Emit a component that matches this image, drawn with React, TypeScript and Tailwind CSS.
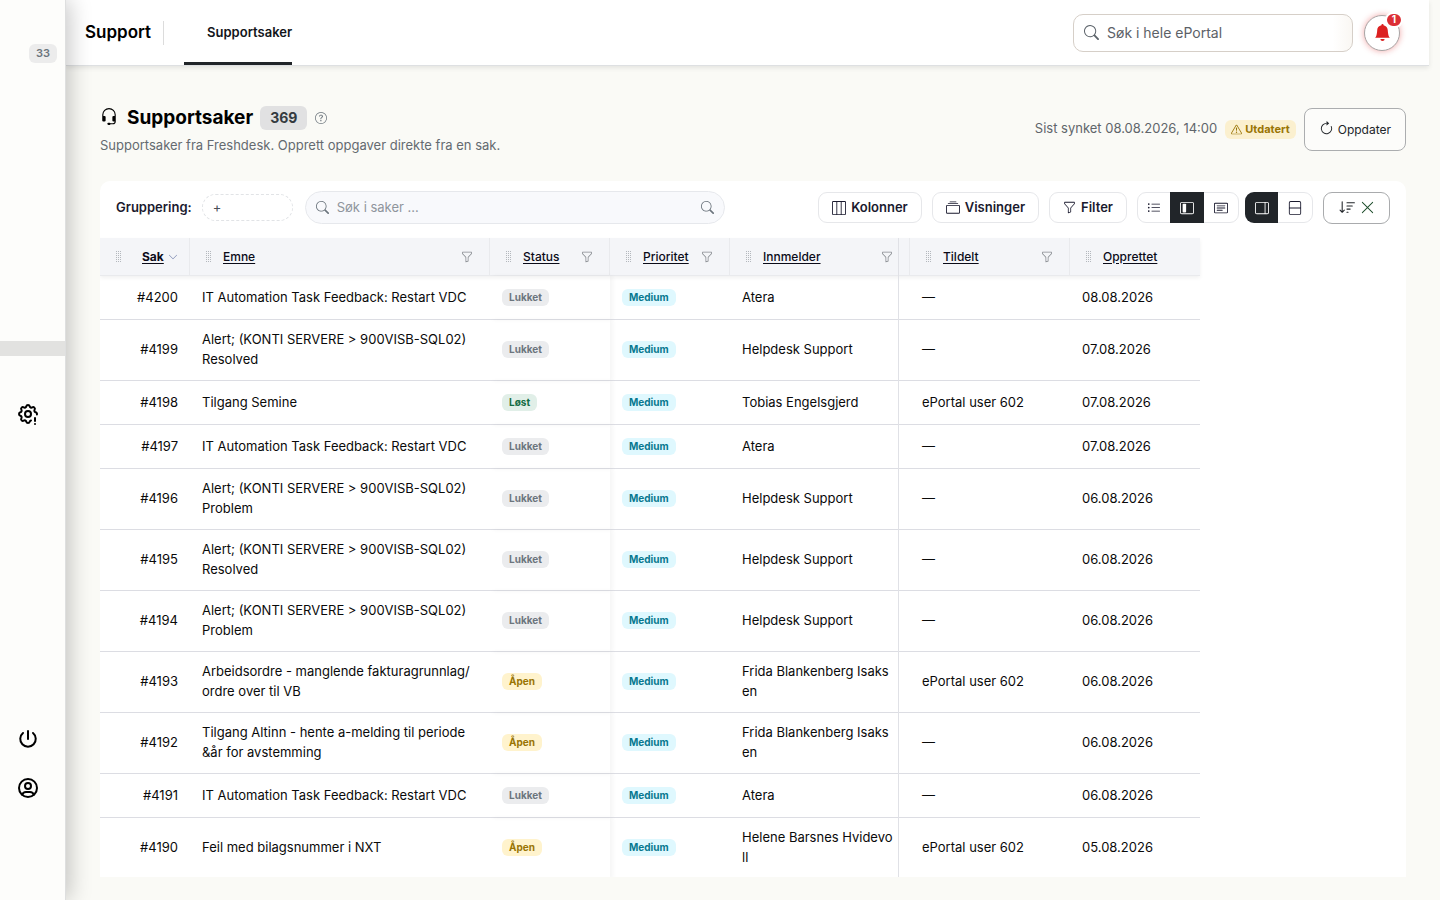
import type { ReactNode } from 'react';
import {
  BsArrowClockwise,
  BsBellFill,
  BsCardText,
  BsChevronDown,
  BsCollection,
  BsExclamationTriangle,
  BsFunnel,
  BsHeadset,
  BsLayoutSidebarInset,
  BsLayoutSidebarReverse,
  BsLayoutSplit,
  BsLayoutThreeColumns,
  BsListUl,
  BsQuestionCircle,
  BsSearch,
  BsSortDown,
  BsXLg,
} from 'react-icons/bs';
import { TbPower, TbSettingsExclamation, TbUserCircle } from 'react-icons/tb';

type Status = 'Lukket' | 'Løst' | 'Åpen';

interface Ticket {
  id: number;
  subject: string;
  status: Status;
  requester: string;
  assignee: string;
  created: string;
}

const tickets: Ticket[] = [
  { id: 4200, subject: 'IT Automation Task Feedback: Restart VDC', status: 'Lukket', requester: 'Atera', assignee: '—', created: '08.08.2026' },
  { id: 4199, subject: 'Alert; (KONTI SERVERE > 900VISB-SQL02) Resolved', status: 'Lukket', requester: 'Helpdesk Support', assignee: '—', created: '07.08.2026' },
  { id: 4198, subject: 'Tilgang Semine', status: 'Løst', requester: 'Tobias Engelsgjerd', assignee: 'ePortal user 602', created: '07.08.2026' },
  { id: 4197, subject: 'IT Automation Task Feedback: Restart VDC', status: 'Lukket', requester: 'Atera', assignee: '—', created: '07.08.2026' },
  { id: 4196, subject: 'Alert; (KONTI SERVERE > 900VISB-SQL02) Problem', status: 'Lukket', requester: 'Helpdesk Support', assignee: '—', created: '06.08.2026' },
  { id: 4195, subject: 'Alert; (KONTI SERVERE > 900VISB-SQL02) Resolved', status: 'Lukket', requester: 'Helpdesk Support', assignee: '—', created: '06.08.2026' },
  { id: 4194, subject: 'Alert; (KONTI SERVERE > 900VISB-SQL02) Problem', status: 'Lukket', requester: 'Helpdesk Support', assignee: '—', created: '06.08.2026' },
  { id: 4193, subject: 'Arbeidsordre - manglende fakturagrunnlag/\u200bordre over til VB', status: 'Åpen', requester: 'Frida Blankenberg Isaksen', assignee: 'ePortal user 602', created: '06.08.2026' },
  { id: 4192, subject: 'Tilgang Altinn - hente a-melding til periode &år for avstemming', status: 'Åpen', requester: 'Frida Blankenberg Isaksen', assignee: '—', created: '06.08.2026' },
  { id: 4191, subject: 'IT Automation Task Feedback: Restart VDC', status: 'Lukket', requester: 'Atera', assignee: '—', created: '06.08.2026' },
  { id: 4190, subject: 'Feil med bilagsnummer i NXT', status: 'Åpen', requester: 'Helene Barsnes Hvidevoll', assignee: 'ePortal user 602', created: '05.08.2026' },
];

const columns = [
  { label: 'Sak', width: 'w-[90px]', filter: false, sorted: true },
  { label: 'Emne', width: 'w-[300px]', filter: true, sorted: false },
  { label: 'Status', width: 'w-[120px]', filter: true, sorted: false },
  { label: 'Prioritet', width: 'w-[120px]', filter: true, sorted: false },
  { label: 'Innmelder', width: 'w-[180px]', filter: true, sorted: false },
  { label: 'Tildelt', width: 'w-[160px]', filter: true, sorted: false },
  { label: 'Opprettet', width: 'w-[130px]', filter: false, sorted: false },
];

const statusStyles: Record<Status, string> = {
  Lukket: 'bg-[#ebecee] text-[#6c757d]',
  Løst: 'bg-[#e1efe8] text-[#146c43]',
  Åpen: 'bg-[#fff3cd] text-[#997404]',
};

function Badge({ className, children }: { className: string; children: ReactNode }) {
  return (
    <span className={`inline-block rounded-md px-[7px] align-[1px] text-[10px] leading-[17px] font-bold ${className}`}>
      {children}
    </span>
  );
}

function Grip() {
  return (
    <svg className="h-3 w-[6px] shrink-0 text-[#b4b8bd]" viewBox="0 0 6 12" fill="currentColor" aria-hidden="true">
      {[0, 2, 4, 6, 8, 10].map((y) => (
        <g key={y}>
          <rect x="0" y={y} width="1" height="1" />
          <rect x="2" y={y} width="1" height="1" />
          <rect x="4" y={y} width="1" height="1" />
        </g>
      ))}
    </svg>
  );
}

function Sidebar() {
  return (
    <aside className="relative z-20 flex w-[66px] shrink-0 flex-col border-r border-[#dedfdf] bg-[#fdfdfb] shadow-[4px_0_22px_rgba(0,0,0,0.22)]">
      <div className="flex justify-end pt-11 pr-2">
        <span className="rounded-md bg-[#ececec] px-[7px] text-[11px] leading-[19px] font-semibold text-[#6c757d]">33</span>
      </div>
      <div className="mt-[278px] h-[15px] bg-[#e2e2e0]" />
      <nav className="flex flex-1 flex-col pt-[46px] pb-[100px] pl-4 text-black">
        <a href="#innstillinger" aria-label="Innstillinger">
          <TbSettingsExclamation className="size-6" />
        </a>
        <a href="#logg-ut" aria-label="Logg ut" className="mt-auto">
          <TbPower className="size-6" />
        </a>
        <a href="#profil" aria-label="Profil" className="mt-[25px]">
          <TbUserCircle className="size-6" />
        </a>
      </nav>
    </aside>
  );
}

function TopBar() {
  return (
    <header className="relative z-10 mr-[11px] flex h-[66px] shrink-0 items-stretch border-b border-[#dee0e2] bg-white pr-[29px] pl-[19px] shadow-[0_2px_5px_rgba(0,0,0,0.09)]">
      <div className="flex items-center">
        <span className="text-[17px] font-semibold text-black">Support</span>
        <span className="ml-3 h-6 w-px bg-[#dcdcdc]" />
      </div>
      <nav className="ml-5 flex">
        <a href="#supportsaker" className="flex items-center rounded-t-sm border-b-3 border-[#212529] pt-[3px] pl-[23px] text-[13px] font-semibold text-[#12151a]">
          Supportsaker
        </a>
      </nav>
      <div className="ml-auto flex items-center gap-[11px]">
        <label className="flex h-[38px] w-[280px] items-center gap-2 rounded-[10px] border border-[#d6cfc8] bg-linear-to-r from-white from-93% to-[#faf7f3] px-[10px]">
          <BsSearch className="size-[15px] text-[#5c636a]" />
          <input
            type="search"
            aria-label="Søk i hele ePortal"
            placeholder="Søk i hele ePortal"
            className="min-w-0 flex-1 bg-transparent text-[14px] text-[#212529] outline-none placeholder:text-[#5c6167]"
          />
        </label>
        <button type="button" aria-label="Varsler" className="relative flex size-9 items-center justify-center rounded-full border border-[#a9a5a5] bg-white text-[#dc2020] shadow-[0_0_6px_rgba(220,38,38,0.4)]">
          <BsBellFill className="size-[17px]" />
          <span className="absolute -top-1 -right-1 flex h-4 w-[18px] items-center justify-center rounded-full border-2 border-white bg-[#dc2f35] text-[10px] font-bold text-white">
            1
          </span>
        </button>
      </div>
    </header>
  );
}

function PageHeading() {
  return (
    <div className="flex items-center justify-between">
      <div>
        <div className="flex items-center">
          <BsHeadset className="mb-[3px] size-[18px] text-black" />
          <h1 className="ml-[9px] text-[19px] leading-6 font-bold text-black">Supportsaker</h1>
          <span className="ml-[7px] rounded-md bg-[#e1e1e2] px-[10px] text-[14px] leading-6 font-bold text-[#343a40]">369</span>
          <button type="button" aria-label="Hjelp" className="ml-2 text-[#6c757d]">
            <BsQuestionCircle className="size-3" />
          </button>
        </div>
        <p className="mt-[5px] text-[13px] leading-5 text-[#646a70]">
          Supportsaker fra Freshdesk. Opprett oppgaver direkte fra en sak.
        </p>
      </div>
      <div className="mb-[3px] flex items-center gap-2">
        <span className="text-[13px] text-[#5f656b]">Sist synket 08.08.2026, 14:00</span>
        <span className="flex items-center gap-[3px] rounded-md bg-[#fbf0cf] px-[6px] text-[11px] leading-[19px] font-bold text-[#997404]">
          <BsExclamationTriangle className="size-[11px]" />
          Utdatert
        </span>
        <button type="button" className="flex h-[43px] items-center gap-1 rounded-lg border border-[#abadaf] bg-[#fcfcfa] px-[14px] pt-[2px] text-[12px] text-[#212529]">
          <BsArrowClockwise className="mb-1 size-[15px]" />
          Oppdater
        </button>
      </div>
    </div>
  );
}

function ToolButton({ icon, children }: { icon: ReactNode; children: ReactNode }) {
  return (
    <button type="button" className="flex h-[31px] items-center gap-[5px] rounded-[9px] border border-[#e6e7ea] bg-white px-[13px] text-[13px] font-semibold text-[#1a1a2e]">
      {icon}
      {children}
    </button>
  );
}

function Toolbar() {
  return (
    <div className="flex h-[57px] items-center px-4 pb-1">
      <span className="text-[13px] font-semibold text-[#1a1a2e]">Gruppering:</span>
      <button type="button" aria-label="Legg til gruppering" className="ml-[10px] flex h-[27px] w-[91px] items-center rounded-full border border-dashed border-[#e1e3e6] px-[10px] text-[13px] text-[#495057]">
        +
      </button>
      <label className="ml-3 flex h-[33px] w-[420px] items-center gap-2 rounded-full border border-[#e6e8ec] bg-[#f8f9fc] px-[10px] text-[#6c757d]">
        <BsSearch className="size-[13px]" />
        <input
          type="search"
          aria-label="Søk i saker"
          placeholder="Søk i saker ..."
          className="min-w-0 flex-1 bg-transparent text-[13px] text-[#212529] outline-none placeholder:text-[#8f959c]"
        />
        <BsSearch className="size-[13px]" />
      </label>
      <div className="ml-auto flex items-center gap-[10px]">
        <ToolButton icon={<BsLayoutThreeColumns className="size-[14px]" />}>Kolonner</ToolButton>
        <ToolButton icon={<BsCollection className="size-[14px]" />}>Visninger</ToolButton>
        <ToolButton icon={<BsFunnel className="size-[13px]" />}>Filter</ToolButton>
        <div className="flex h-[31px] rounded-[9px] border border-[#e6e7ea] text-[#1a1a2e]">
          <button type="button" aria-label="Liste" className="flex w-8 items-center justify-center">
            <BsListUl className="size-[14px]" />
          </button>
          <button type="button" aria-label="Delt visning" className="-my-px flex w-[34px] items-center justify-center bg-[#212529] text-white">
            <BsLayoutSidebarInset className="size-[14px]" />
          </button>
          <button type="button" aria-label="Kort" className="flex w-[34px] items-center justify-center">
            <BsCardText className="size-[14px]" />
          </button>
        </div>
        <div className="-ml-1 flex h-[31px] rounded-[9px] border border-[#e6e7ea] text-[#1a1a2e]">
          <button type="button" aria-label="Panel til høyre" className="-my-px -ml-px flex w-[33px] items-center justify-center rounded-l-[9px] bg-[#212529] text-white">
            <BsLayoutSidebarReverse className="size-[14px]" />
          </button>
          <button type="button" aria-label="Panel under" className="flex w-[34px] items-center justify-center">
            <BsLayoutSplit className="size-[14px] rotate-90" />
          </button>
        </div>
        <button type="button" aria-label="Nullstill sortering" className="flex h-8 w-[67px] items-center justify-center gap-1 rounded-[9px] border border-[#a9abad] text-[#212529]">
          <BsSortDown className="size-[17px]" />
          <BsXLg className="size-[15px] text-[#1d4d2b]" />
        </button>
      </div>
    </div>
  );
}

function TicketTable() {
  return (
    <div className="relative w-[1100px]">
      <table className="w-full table-fixed border-separate border-spacing-0 text-[13px]">
        <thead>
          <tr className="h-[38px] shadow-[0_2px_4px_rgba(0,0,0,0.06)]">
            {columns.map((col) => (
              <th
                key={col.label}
                scope="col"
                className={`border-r border-b border-[#e9eaed] bg-[#f4f5f8] p-0 last:border-r-0 ${col.width}`}
              >
                <div className="flex items-center px-4">
                  <Grip />
                  <a
                    href={`#${col.label.toLowerCase()}`}
                    className={`text-[12px] text-[#0b0b18] underline underline-offset-2 ${col.sorted ? 'ml-5 font-bold' : 'ml-[11px] font-medium'}`}
                  >
                    {col.label}
                  </a>
                  {col.sorted && <BsChevronDown className="-mr-2 ml-1 size-[10px] shrink-0 text-[#6b7aa8]" />}
                  {col.filter && (
                    <button type="button" aria-label={`Filtrer ${col.label}`} className="ml-auto text-[#85898e]">
                      <BsFunnel className="size-3" />
                    </button>
                  )}
                </div>
              </th>
            ))}
          </tr>
        </thead>
        <tbody className="leading-5 text-[#0a0a0a]">
          {tickets.map((t) => (
            <tr key={t.id} className="h-11 *:border-b *:border-[#dcdde3] *:pt-[9px] *:pb-[11px] *:pl-3">
              <td className="pr-3 text-right">#{t.id}</td>
              <td className="pr-3 wrap-anywhere">{t.subject}</td>
              <td className="shadow-[3px_0_4px_rgba(0,0,0,0.04)]">
                <Badge className={statusStyles[t.status]}>{t.status}</Badge>
              </td>
              <td>
                <Badge className="bg-[#dff8fe] text-[#087990]">Medium</Badge>
              </td>
              <td className="pr-4 break-all">{t.requester}</td>
              <td>{t.assignee}</td>
              <td>{t.created}</td>
            </tr>
          ))}
        </tbody>
      </table>
      <div className="absolute inset-y-0 left-[798px] w-px bg-[#e0e1e6]" />
    </div>
  );
}

export default function App() {
  return (
    <div className="flex h-screen bg-[#fafaf6] font-['Inter','Liberation_Sans',sans-serif]">
      <Sidebar />
      <div className="flex min-w-0 flex-1 flex-col">
        <TopBar />
        <main className="flex min-h-0 flex-1 flex-col px-[34px] pt-10 pb-[23px]">
          <PageHeading />
          <section className="mt-[26px] min-h-0 flex-1 overflow-hidden rounded-t-[10px] bg-white">
            <Toolbar />
            <TicketTable />
          </section>
        </main>
      </div>
    </div>
  );
}
